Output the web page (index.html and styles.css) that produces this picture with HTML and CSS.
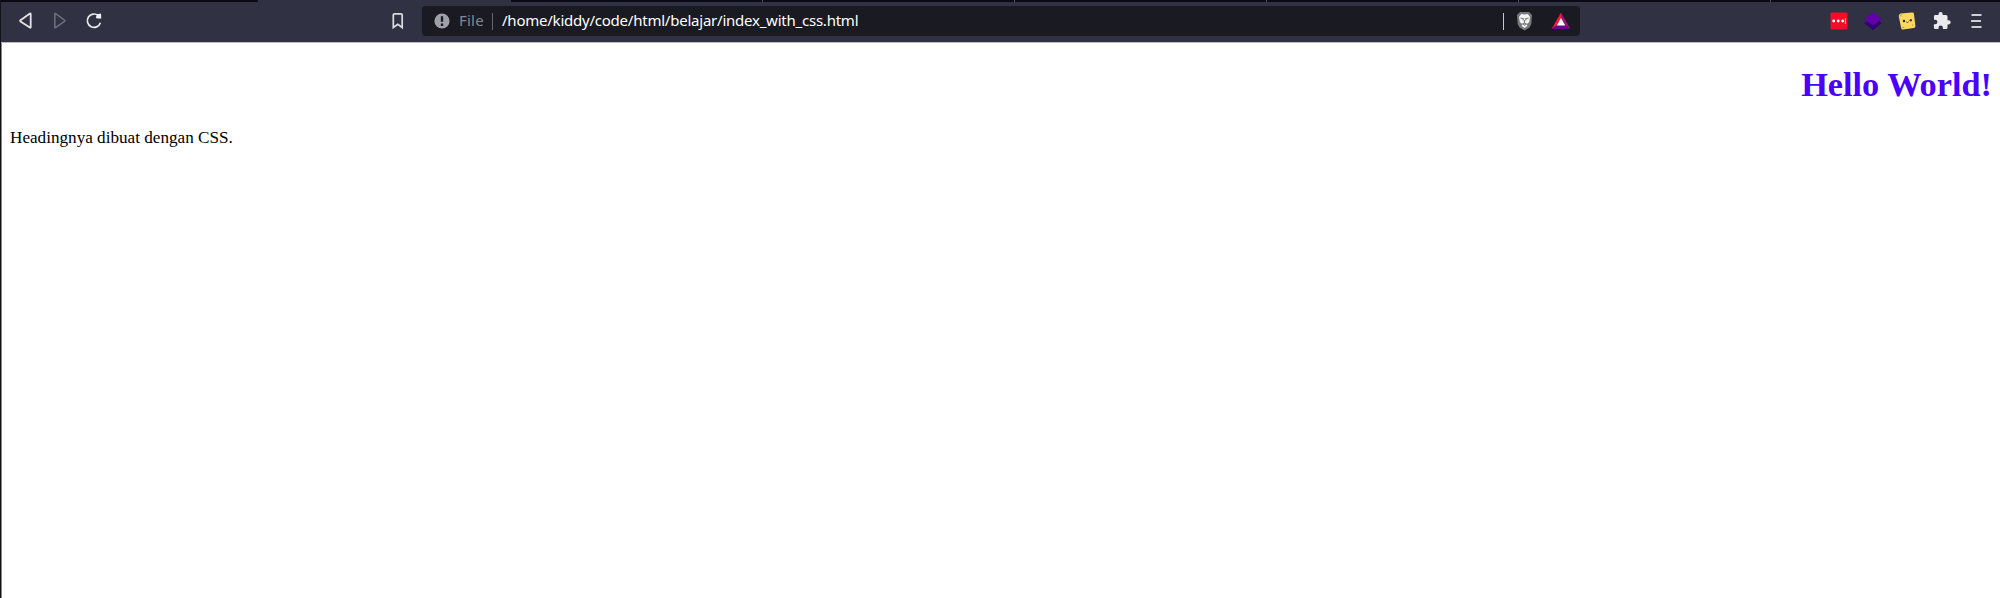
FILE: index.html
```html
<!DOCTYPE html>
<html lang="id">
<head>
<meta charset="utf-8">
<title>index_with_css.html</title>
<link rel="stylesheet" href="styles.css">
</head>
<body>
<div class="browser">
  <div class="tabs"><span class="before"></span><span class="active"></span><span class="tab"></span><span class="tab"></span><span class="tab"></span><span class="tab"></span><span class="tab"></span></div>
  <header class="toolbar">
    <nav class="nav">
      <svg width="16" height="18" viewBox="0 0 16 18"><path d="M12.7 2v13.2q0 .9-.8.4L2.5 9.4q-.8-.6 0-1.2L11.9 1.6q.8-.5.8.4Z" fill="none" stroke="#e3e3e6" stroke-width="1.8"/></svg>
      <svg width="16" height="18" viewBox="0 0 16 18"><path d="M2.8 2v13.2q0 .9.8.4l8.9-6.2q.8-.6 0-1.2L3.6 1.6q-.8-.5-.8.4Z" fill="none" stroke="#6c6d79" stroke-width="1.6"/></svg>
      <svg class="reload" width="18" height="18" viewBox="0 0 18 18"><path d="M15.4 10.8A6.7 6.7 0 1 1 13.4 3.6" fill="none" stroke="#e8e8eb" stroke-width="1.7"/><path d="M12 2.2 15.8 1.5 16.2 3V6.6H12L10.8 5.4Z" fill="#f1f1f3"/></svg>
    </nav>
    <svg class="bookmark" width="14" height="18" viewBox="0 0 14 18"><path d="M2.3 15.5V3.2q0-1.3 1.3-1.3h6.3q1.3 0 1.3 1.3v12.3L6.8 12.3Z" fill="none" stroke="#dcdce0" stroke-width="1.7"/></svg>
    <div class="address">
      <svg class="info" width="16" height="16" viewBox="0 0 16 16"><circle cx="8" cy="8" r="7.6" fill="#9da0a8"/><path d="M8 3.3v5.5M8 10.6v2.3" stroke="#191a22" stroke-width="2.3"/></svg>
      <span class="scheme">File</span>
      <span class="divider"></span>
      <span class="url">/home/kiddy/code/html/belajar/index_with_css.html</span>
      <span class="divider light"></span>
      <svg class="shield" width="17" height="20" viewBox="0 0 17 20"><path d="M4 1h9l3 3-.7 9-1.8 3.4L8.5 19.5 3.5 16.4 1.7 13 1 4Z" fill="#777879"/><path d="m5.2 3 3.3.6 3.3-.6 2.2 3-.8 5-2.2 2 .2 2-2.7 2-2.7-2 .2-2-2.2-2L3 6Z" fill="#f4f4f4"/><path d="m4.5 7 3 .8-.7 1.6M12.5 7l-3 .8.7 1.6M8.5 9v3M6.5 13l2-1 2 1-2 1.2Z" fill="none" stroke="#777879" stroke-width="1.1"/></svg>
      <svg class="rewards" width="20" height="18" viewBox="0 0 20 18"><path d="M10 .5 10 7 5.7 13.7.5 17Z" fill="#ff1835"/><path d="M10 .5 19.5 17 14.3 13.7 10 7Z" fill="#9b1671"/><path d="M.5 17 5.7 13.3h8.6l5.2 3.7Z" fill="#67088f"/><path d="m10 6 4.2 7.5H5.8Z" fill="#fff"/></svg>
    </div>
    <div class="extensions">
      <svg width="18" height="18" viewBox="0 0 18 18"><rect x=".5" y=".5" width="17" height="17" rx="1.5" fill="#fa0b27"/><circle cx="3.7" cy="9" r="1.4" fill="#fff"/><circle cx="8.2" cy="9" r="1.4" fill="#fff"/><circle cx="12.7" cy="9" r="1.4" fill="#fff"/><path d="M15.4 6v6" stroke="#ffb0b7"/></svg>
      <svg width="18" height="18" viewBox="0 0 18 18"><path d="m0 11 9-5 9 5-9 6.9Z" fill="#330077"/><path d="m0 7 9-6.8L18 7l-9 6.2Z" fill="#6100aa"/></svg>
      <svg width="18" height="18" viewBox="0 0 18 18"><path d="M2.5 1.6 14 .4q1.6-.2 1.9 1.4l1.5 12q.3 1.9-1.5 2.3L5 17.6q-1.5.2-1.8-1.4L.8 4.6Q.4 2.4 2.5 1.6Z" fill="#f8d860"/><path d="M2.4 4.5q0-1.8 1.7-2M4.2 15.5l2-.2M14.5 13.8l.5-1.5" stroke="#b7973e" fill="none"/><circle cx="6" cy="9" r="1.2" fill="#222"/><circle cx="12.8" cy="8.2" r="1.2" fill="#513044"/><path d="M8.3 10q1.2 1.2 2.4-.3" fill="none" stroke="#554127"/></svg>
      <svg width="18" height="18" viewBox="0 0 18 18"><path d="M15.6 8.2h-1.1V4.6q0-1.5-1.5-1.5H9.7V2.2a2.1 2.1 0 0 0-4.2 0v.9H2.3Q1 3.1 1 4.5v3.2h1.1a2.3 2.3 0 0 1 0 4.6H.9v3.2Q.9 17 2.3 17h3.2v-1.2a2.2 2.2 0 0 1 4.4 0V17H13q1.5 0 1.5-1.5v-3.1h1.1a2.1 2.1 0 0 0 0-4.2Z" fill="#eaeaec"/></svg>
      <svg width="18" height="18" viewBox="0 0 18 18"><path d="M4.5 3h10M4 9h10M4.5 15h10" stroke="#cfcfd5" stroke-width="2"/></svg>
    </div>
  </header>
  <main class="page">
    <h1 class="title">Hello World!</h1>
    <p class="text">Headingnya dibuat dengan CSS.</p>
  </main>
</div>
</body>
</html>
```
FILE: styles.css
```css
* { box-sizing: border-box; }
body { margin: 0; background: #fff; overflow: hidden; }
svg { display: block; flex: none; }
.browser { height: 598px; border-left: 1px solid #111116; display: flex; flex-direction: column; }
.tabs { display: flex; height: 2px; flex: none; overflow: hidden; background: #0b0915; }
.tabs span { flex: none; }
.before { width: 257px; }
.active { width: 253px; background: #303244; }
.tab { width: 252px; border-right: 1px solid #55545b; }
.toolbar { height: 41px; flex: none; display: flex; align-items: center; background: #303244; border-bottom: 1px solid #b9bac1; padding-bottom: 2px; }
.nav { display: flex; gap: 18px; margin-left: 17px; width: 373px; align-items: center; }
.reload { margin-left: -1px; }
.bookmark { width: 14px; }
.address { display: flex; flex: none; align-items: center; width: 1158px; height: 30px; margin-left: 17px; padding-left: 12px; border-radius: 4px; background: #191a22; font: 15px/28px "Noto Sans", sans-serif; white-space: nowrap; }
.address > * { flex: none; }
.info { margin-right: 9px; }
.scheme { color: #85888e; width: 33px; height: 30px; letter-spacing: .2px; }
.divider { width: 1px; height: 17px; background: #66676d; }
.divider.light { background: #c8c8ca; }
.url { color: #fff; width: 1001px; height: 30px; margin-left: 9px; letter-spacing: -.23px; }
.shield { margin-left: 12px; }
.rewards { margin-left: 18px; }
.extensions { display: flex; gap: 16.2px; margin-left: 250px; }
.page { flex: 1; border-left: 1px solid #85858a; padding: 0 8px; font-family: "Liberation Serif", serif; color: #000; }
.title { margin: 22px 0 0; font-size: 34.3px; line-height: 39px; text-align: right; color: #4a00ff; }
.text { margin: 24px 0 0; font-size: 17.15px; line-height: 20px; }
```
